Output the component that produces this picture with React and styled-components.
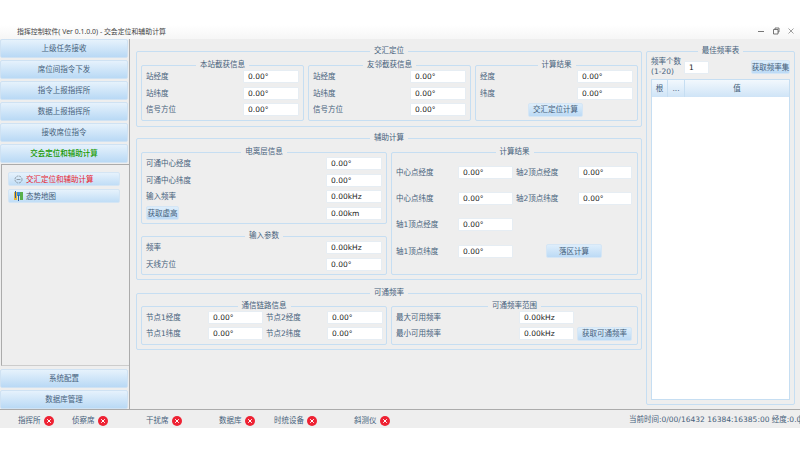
import React from "react";
import styled, { createGlobalStyle } from "styled-components";

const Global = createGlobalStyle`
  html, body { margin: 0; padding: 0; background: #fff; overflow: hidden; }
  #root { width: 800px; height: 453px; }
  * { box-sizing: border-box; }
`;

const FONT = `"DejaVu Sans", "Noto Sans CJK SC", sans-serif`;
const INK = "#46617b";
const LINE = "#c6def2";

const Page = styled.div`
  width: 800px;
  height: 453px;
  padding-top: 25px;
  font: 7.5px/9px ${FONT};
  color: ${INK};
  background: #fff;
`;
const Win = styled.div`
  height: 403px;
  display: flex;
  flex-direction: column;
  background: #eee;
`;
const TitleBar = styled.div`
  height: 14px;
  flex: none;
  display: flex;
  align-items: center;
  padding: 0 5px 2px 17px;
  background: linear-gradient(#fff, #f6f6f6);
  color: #444;
  font: 6.9px/9px "Noto Sans", "Noto Sans CJK SC", sans-serif;
`;
const TitleText = styled.span`
  flex: 1;
`;
const WinBtns = styled.div`
  display: flex;
  gap: 7px;
  align-items: center;
`;
const Body = styled.div`
  height: 371px;
  flex: none;
  display: flex;
  border-bottom: 1px solid #ababab;
`;
const Side = styled.div`
  width: 130px;
  flex: none;
  display: flex;
  flex-direction: column;
  gap: 2px;
  border-right: 1px solid #ababab;
`;
const NavBtn = styled.div`
  height: 19px;
  flex: none;
  margin-right: 1px;
  display: flex;
  align-items: center;
  justify-content: center;
  border: 1px solid #cfe2f3;
  border-radius: 2px;
  background: linear-gradient(#e6f2fc, #b9d9f5);
  color: ${(p) => (p.$active ? "#189a00" : INK)};
  font-weight: ${(p) => (p.$active ? 500 : 400)};
`;
const SubPanel = styled.div`
  flex: 1;
  margin: -1px 0 1px 1px;
  padding: 7px 9px 7px 6px;
  display: flex;
  flex-direction: column;
  gap: 3px;
  border: 1px solid #ababab;
  border-bottom-color: #ccc;
  border-right: none;
`;
const SubItem = styled.div`
  height: 14px;
  display: flex;
  align-items: center;
  gap: 3px;
  padding-left: 5px;
  border-radius: 2px;
  border: 1px solid #d4e5f4;
  background: linear-gradient(#e6f2fc, #c0ddf6);
  color: ${(p) => (p.$on ? "#e8232f" : INK)};
`;
const Main = styled.div`
  flex: 1;
  display: grid;
  grid-template-columns: 506px 149px;
  column-gap: 4px;
  padding: 12px 0 0 6px;
  align-items: start;
`;
const Stack = styled.div`
  display: flex;
  flex-direction: column;
  gap: 11px;
`;
const Box = styled.section`
  height: ${(p) => p.$h}px;
  margin-top: ${(p) => p.$mt || 0}px;
  padding: 0 4px;
  border: 1px solid ${LINE};
  border-radius: 2px;
  display: flex;
  flex-direction: column;
  min-width: 0;
`;
const BoxTitle = styled.div`
  flex: none;
  height: 9px;
  margin: -6px auto 0;
  padding: 0 4px;
  background: #eee;
  text-align: center;
  white-space: nowrap;
`;
const Three = styled.div`
  display: grid;
  grid-template-columns: 163px 163px 163px;
  gap: 4px;
  margin-top: 10px;
`;
const Two = styled.div`
  display: grid;
  grid-template-columns: 246px 247px;
  gap: 4px;
  margin-top: ${(p) => p.$top ?? 10}px;
  align-items: start;
`;
const Col = styled.div`
  display: flex;
  flex-direction: column;
  gap: 12px;
`;
const Rows = styled.div`
  display: flex;
  flex-direction: column;
  gap: 3.5px;
  margin-top: 1px;
`;
const Row = styled.div`
  height: 13px;
  display: flex;
  align-items: center;
  justify-content: space-between;
`;
const Label = styled.span`
  white-space: nowrap;
`;
const Field = styled.div`
  width: ${(p) => p.$w || 56}px;
  height: 13px;
  flex: none;
  padding-left: 4px;
  line-height: 11px;
  background: #fff;
  border: 1px solid #e6edf3;
  border-radius: 1px;
  color: #222;
  white-space: nowrap;
`;
const Btn = styled.div`
  width: ${(p) => p.$w}px;
  height: 14px;
  flex: none;
  display: flex;
  align-items: center;
  justify-content: center;
  border-radius: 2px;
  border: 1px solid #d5e6f5;
  background: linear-gradient(#deeefb, #bcdaf5);
  white-space: nowrap;
`;
const SolveBtn = styled(Btn)`
  margin-right: 50px;
`;
const ResultGrid = styled.div`
  display: grid;
  grid-template-columns: 62px 58px 62px 54px;
  grid-auto-rows: 13px;
  row-gap: 13.2px;
  align-items: center;
  margin-top: 10px;
`;
const CalcBtn = styled(Btn)`
  grid-column: 3 / 5;
  margin-left: 30px;
`;
const LinkGrid = styled.div`
  display: grid;
  grid-template-columns: 62px 58px 61px 56px;
  grid-auto-rows: 13px;
  row-gap: 3px;
  align-items: center;
  margin-top: 1px;
`;
const RangeGrid = styled.div`
  display: grid;
  grid-template-columns: 123px 58px 55px;
  grid-auto-rows: 13px;
  row-gap: 3px;
  align-items: center;
  margin-top: 1px;
`;
const FreqTop = styled.div`
  display: flex;
  align-items: center;
  height: 14px;
  margin-top: 5px;
`;
const FreqLabel = styled.div`
  width: 33px;
  line-height: 10px;
  white-space: nowrap;
`;
const FreqBtn = styled(Btn)`
  margin-left: auto;
`;
const Table = styled.div`
  margin-top: 5px;
  height: 321px;
  background: #fff;
  border: 1px solid ${LINE};
`;
const THead = styled.div`
  display: grid;
  grid-template-columns: 16px 17px 1fr;
  height: 17px;
  background: linear-gradient(#f2f8fd, #cfe4f7);
`;
const Th = styled.div`
  display: flex;
  align-items: center;
  justify-content: center;
  border-right: 1px solid ${LINE};
  &:last-child { border-right: none; }
`;
const Status = styled.div`
  flex: 1;
  display: flex;
  align-items: center;
  padding: 3px 0 0 18px;
  overflow: hidden;
`;
const StatusItem = styled.div`
  width: ${(p) => p.$w}px;
  flex: none;
  display: flex;
  align-items: center;
  gap: 3px;
  white-space: nowrap;
`;
const Clock = styled.div`
  margin-left: auto;
  width: 171px;
  flex: none;
  white-space: nowrap;
  border-right: 1px solid #bbb;
  margin-top: -3px;
`;

const ErrIcon = () => (
  <svg width="10" height="10" viewBox="0 0 10 10">
    <circle cx="5" cy="5" r="5" fill="#ee2233" />
    <path d="M3.2 3.2l3.6 3.6M6.8 3.2l-3.6 3.6" stroke="#fff" strokeWidth="1" fill="none" />
  </svg>
);
const TargetIcon = () => (
  <svg width="9" height="9" viewBox="0 0 9 9">
    <circle cx="4.5" cy="4.5" r="3.5" fill="none" stroke="#7d8a94" strokeWidth=".8" strokeDasharray="2 .8" />
    <path d="M2.6 4.5h3.8" stroke="#7d8a94" strokeWidth=".8" />
  </svg>
);
const MapIcon = () => (
  <svg width="9" height="10" viewBox="0 0 9 10">
    <rect x="0" y="1" width="9" height="8" fill="#dbe8cf" />
    <rect x="0" y="1" width="3" height="8" fill="#e8b53a" />
    <path d="M3 1h3v4H3z" fill="#3f8fd8" />
    <path d="M6 1h3v8H6z" fill="#58b04a" />
    <path d="M1.5 0v7M4.5 4v6" stroke="#2a5fa8" strokeWidth="1" />
  </svg>
);

const Pair = ({ l, v }) => (
  <Row>
    <Label>{l}</Label>
    <Field>{v}</Field>
  </Row>
);
const DEG = "0.00°";
const KHZ = "0.00kHz";

export default function App() {
  return (
    <Page>
      <Global />
      <Win>
        <TitleBar>
          <TitleText>指挥控制软件( Ver 0.1.0.0) - 交会定位和辅助计算</TitleText>
          <WinBtns>
            <svg width="8" height="8" viewBox="0 0 8 8"><path d="M1 4.5h6" stroke="#555" strokeWidth=".8" /></svg>
            <svg width="8" height="8" viewBox="0 0 8 8"><path d="M1.5 2.5h4.5v4.5h-4.5zM3 2.5v-1.5h4v4h-1" stroke="#555" strokeWidth=".8" fill="none" /></svg>
            <svg width="8" height="8" viewBox="0 0 8 8"><path d="M1.5 1.5l5 5M6.5 1.5l-5 5" stroke="#777" strokeWidth=".7" /></svg>
          </WinBtns>
        </TitleBar>
        <Body>
          <Side>
            <NavBtn>上级任务接收</NavBtn>
            <NavBtn>席位间指令下发</NavBtn>
            <NavBtn>指令上报指挥所</NavBtn>
            <NavBtn>数据上报指挥所</NavBtn>
            <NavBtn>接收席位指令</NavBtn>
            <NavBtn $active>交会定位和辅助计算</NavBtn>
            <SubPanel>
              <SubItem $on><TargetIcon />交汇定位和辅助计算</SubItem>
              <SubItem><MapIcon />态势地图</SubItem>
            </SubPanel>
            <NavBtn>系统配置</NavBtn>
            <NavBtn>数据库管理</NavBtn>
          </Side>
          <Main>
            <Stack>
              <Box $h={76}>
                <BoxTitle>交汇定位</BoxTitle>
                <Three>
                  <Box $h={56}>
                    <BoxTitle>本站截获信息</BoxTitle>
                    <Rows>
                      <Pair l="站经度" v={DEG} />
                      <Pair l="站纬度" v={DEG} />
                      <Pair l="信号方位" v={DEG} />
                    </Rows>
                  </Box>
                  <Box $h={56}>
                    <BoxTitle>友邻截获信息</BoxTitle>
                    <Rows>
                      <Pair l="站经度" v={DEG} />
                      <Pair l="站纬度" v={DEG} />
                      <Pair l="信号方位" v={DEG} />
                    </Rows>
                  </Box>
                  <Box $h={56}>
                    <BoxTitle>计算结果</BoxTitle>
                    <Rows>
                      <Pair l="经度" v={DEG} />
                      <Pair l="纬度" v={DEG} />
                      <Row>
                        <span />
                        <SolveBtn $w={55}>交汇定位计算</SolveBtn>
                      </Row>
                    </Rows>
                  </Box>
                </Three>
              </Box>

              <Box $h={142}>
                <BoxTitle>辅助计算</BoxTitle>
                <Two>
                  <Col>
                    <Box $h={72}>
                      <BoxTitle>电离层信息</BoxTitle>
                      <Rows>
                        <Pair l="可通中心经度" v={DEG} />
                        <Pair l="可通中心纬度" v={DEG} />
                        <Pair l="输入频率" v={KHZ} />
                        <Row>
                          <Btn $w={33}>获取虚高</Btn>
                          <Field>0.00km</Field>
                        </Row>
                      </Rows>
                    </Box>
                    <Box $h={39}>
                      <BoxTitle>输入参数</BoxTitle>
                      <Rows>
                        <Pair l="频率" v={KHZ} />
                        <Pair l="天线方位" v={DEG} />
                      </Rows>
                    </Box>
                  </Col>
                  <Box $h={123}>
                    <BoxTitle>计算结果</BoxTitle>
                    <ResultGrid>
                      <Label>中心点经度</Label>
                      <Field $w={55}>{DEG}</Field>
                      <Label>轴2顶点经度</Label>
                      <Field $w={54}>{DEG}</Field>
                      <Label>中心点纬度</Label>
                      <Field $w={55}>{DEG}</Field>
                      <Label>轴2顶点纬度</Label>
                      <Field $w={54}>{DEG}</Field>
                      <Label>轴1顶点经度</Label>
                      <Field $w={55}>{DEG}</Field>
                      <span />
                      <span />
                      <Label>轴1顶点纬度</Label>
                      <Field $w={55}>{DEG}</Field>
                      <CalcBtn $w={56}>落区计算</CalcBtn>
                    </ResultGrid>
                  </Box>
                </Two>
              </Box>

              <Box $h={57} $mt={2}>
                <BoxTitle>可通频率</BoxTitle>
                <Two $top={9}>
                  <Box $h={39}>
                    <BoxTitle>通信链路信息</BoxTitle>
                    <LinkGrid>
                      <Label>节点1经度</Label>
                      <Field $w={55}>{DEG}</Field>
                      <Label>节点2经度</Label>
                      <Field>{DEG}</Field>
                      <Label>节点1纬度</Label>
                      <Field $w={55}>{DEG}</Field>
                      <Label>节点2纬度</Label>
                      <Field>{DEG}</Field>
                    </LinkGrid>
                  </Box>
                  <Box $h={39}>
                    <BoxTitle>可通频率范围</BoxTitle>
                    <RangeGrid>
                      <Label>最大可用频率</Label>
                      <Field $w={55}>{KHZ}</Field>
                      <span />
                      <Label>最小可用频率</Label>
                      <Field $w={55}>{KHZ}</Field>
                      <Btn $w={55}>获取可通频率</Btn>
                    </RangeGrid>
                  </Box>
                </Two>
              </Box>
            </Stack>

            <Box $h={354}>
              <BoxTitle>最佳频率表</BoxTitle>
              <FreqTop>
                <FreqLabel>频率个数<br />(1-20)</FreqLabel>
                <Field $w={25}>1</Field>
                <FreqBtn $w={39}>获取频率集</FreqBtn>
              </FreqTop>
              <Table>
                <THead>
                  <Th>根</Th>
                  <Th>...</Th>
                  <Th>值</Th>
                </THead>
              </Table>
            </Box>
          </Main>
        </Body>
        <Status>
          <StatusItem $w={54}>指挥所<ErrIcon /></StatusItem>
          <StatusItem $w={74}>侦察席<ErrIcon /></StatusItem>
          <StatusItem $w={73}>干扰席<ErrIcon /></StatusItem>
          <StatusItem $w={55}>数据库<ErrIcon /></StatusItem>
          <StatusItem $w={80}>时统设备<ErrIcon /></StatusItem>
          <StatusItem $w={40}>斜测仪<ErrIcon /></StatusItem>
          <Clock>当前时间:0/00/16432 16384:16385:00 经度:0.0</Clock>
        </Status>
      </Win>
    </Page>
  );
}
